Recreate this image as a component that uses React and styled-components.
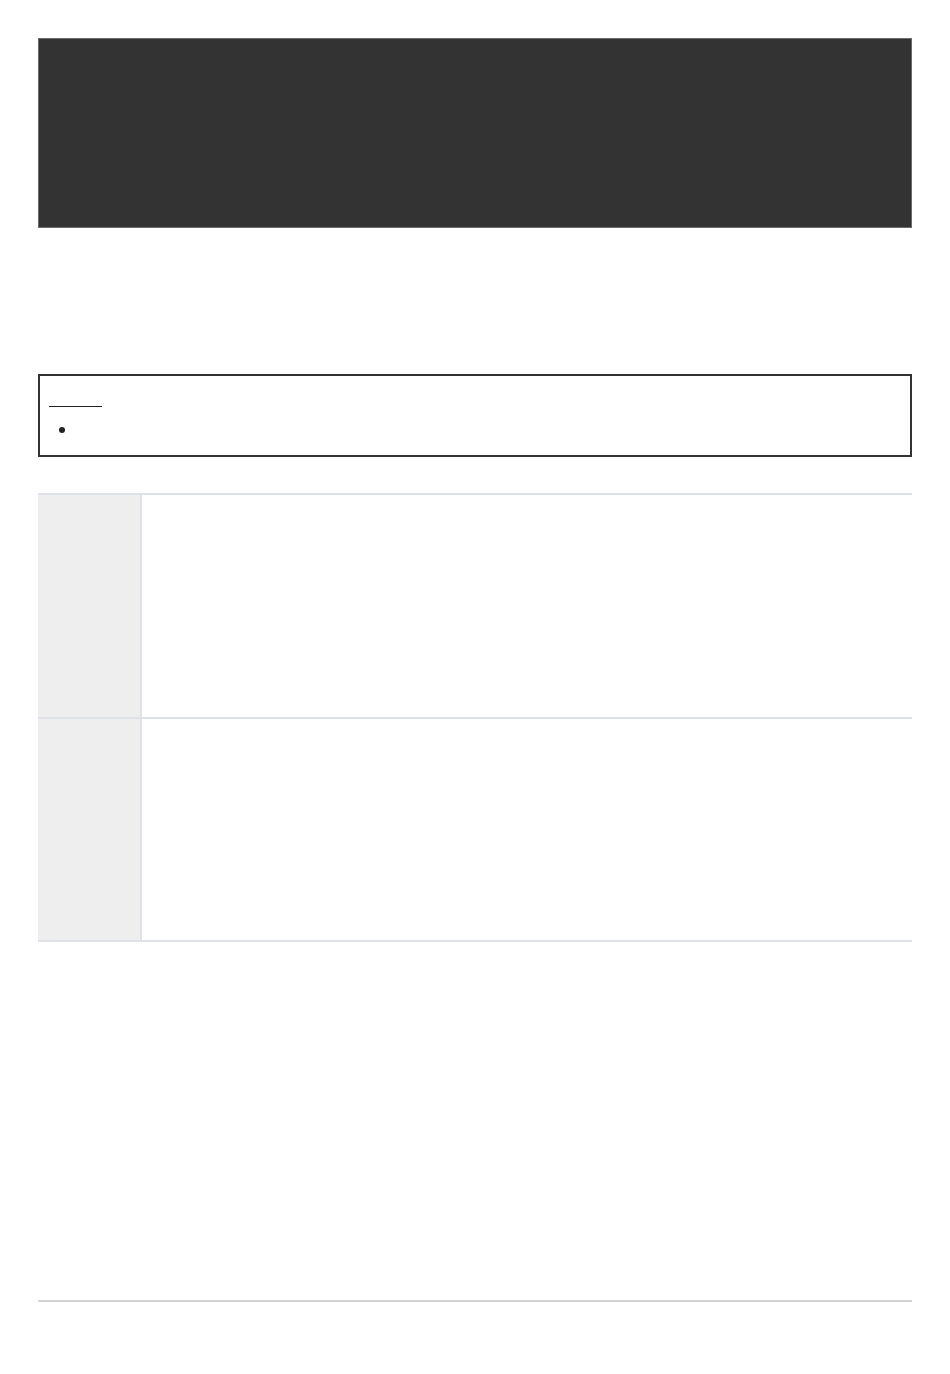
import React from 'react';
import styled, { createGlobalStyle } from 'styled-components';

const GlobalStyle = createGlobalStyle`
  * { box-sizing: border-box; }
  body {
    margin: 0;
    background: #ffffff;
    font-family: "Liberation Sans", Arial, sans-serif;
    font-size: 16px;
    color: #222;
  }
`;

const Page = styled.div`
  padding: 38px 38px 0;
  min-height: 1374px;
`;

const Banner = styled.header`
  height: 190px;
  background-color: #333333;
  border: 1px solid #6a6a6a;
`;

const Notice = styled.section`
  margin-top: 146px;
  height: 83px;
  border: 2px solid #333333;
  padding: 0 9px;
`;

const NoticeTitle = styled.div`
  width: 53px;
  height: 31px;
  border-bottom: 1px solid #222;
`;

const NoticeList = styled.ul`
  list-style: none;
  margin: 10px 0 0;
  padding: 0;
`;

const NoticeItem = styled.li`
  display: flex;
  align-items: center;
  height: 26px;

  &::before {
    content: '';
    width: 6px;
    height: 6px;
    border-radius: 50%;
    background: #222;
    margin-left: 10px;
  }
`;

const Table = styled.div`
  margin-top: 36px;
  border-bottom: 2px solid #dee2e6;
`;

const Row = styled.div`
  display: grid;
  grid-template-columns: 104px 1fr;
  height: ${(p) => p.$height}px;
  border-top: 2px solid #dee2e6;
`;

const LabelCell = styled.div`
  background: #eeeeee;
  border-right: 2px solid #dee2e6;
`;

const ValueCell = styled.div`
  background: #ffffff;
`;

const Rule = styled.hr`
  margin: 358px 0 0;
  border: 0;
  border-top: 2px solid #d3d3d3;
`;

const rows = [224, 223];

export default function App() {
  return (
    <>
      <GlobalStyle />
      <Page>
        <Banner />
        <Notice>
          <NoticeTitle />
          <NoticeList>
            <NoticeItem />
          </NoticeList>
        </Notice>
        <Table>
          {rows.map((h, i) => (
            <Row key={i} $height={h}>
              <LabelCell />
              <ValueCell />
            </Row>
          ))}
        </Table>
        <Rule />
      </Page>
    </>
  );
}
